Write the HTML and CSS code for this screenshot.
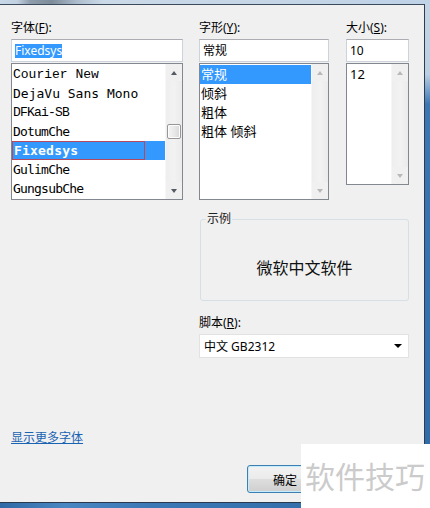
FILE: index.html
```html
<!DOCTYPE html>
<html lang="zh-CN">
<head>
<meta charset="utf-8">
<title>字体</title>
<link rel="stylesheet" href="styles.css">
</head>
<body>
<div class="screen">
  <div class="topbar"></div>
  <div class="mid">
    <div class="dialog">
      <div class="cols">
        <div class="col col-font">
          <div class="label">字体(<u>F</u>):</div>
          <div class="input"><span class="seltext">Fixedsys</span></div>
          <div class="list list-font">
            <div class="items">
              <div class="item f-courier">Courier New</div>
              <div class="item f-dejavu">DejaVu Sans Mono</div>
              <div class="item f-serifnarrow">DFKai-SB</div>
              <div class="item f-narrow">DotumChe</div>
              <div class="item selected f-fixed"><span class="focus">Fixedsys</span></div>
              <div class="item f-narrow">GulimChe</div>
              <div class="item f-narrow">GungsubChe</div>
            </div>
            <div class="sb">
              <div class="sb-btn"><i class="arr up"></i></div>
              <div class="sb-track"><div class="thumb"></div></div>
              <div class="sb-btn"><i class="arr down"></i></div>
            </div>
          </div>
        </div>
        <div class="col col-style">
          <div class="label">字形(<u>Y</u>):</div>
          <div class="input"><span>常规</span></div>
          <div class="list list-style">
            <div class="items cjk">
              <div class="item selected">常规</div>
              <div class="item">倾斜</div>
              <div class="item">粗体</div>
              <div class="item">粗体 倾斜</div>
            </div>
            <div class="sb">
              <div class="sb-btn"><i class="arr up off"></i></div>
              <div class="sb-track"></div>
              <div class="sb-btn"><i class="arr down off"></i></div>
            </div>
          </div>
        </div>
        <div class="col col-size">
          <div class="label">大小(<u>S</u>):</div>
          <div class="input"><span>10</span></div>
          <div class="list list-size">
            <div class="items cjk size-items">
              <div class="item">12</div>
            </div>
            <div class="sb">
              <div class="sb-btn"><i class="arr up off"></i></div>
              <div class="sb-track"></div>
              <div class="sb-btn"><i class="arr down off"></i></div>
            </div>
          </div>
        </div>
      </div>
      <div class="lower">
        <fieldset class="sample">
          <legend>示例</legend>
          <div class="sample-text">微软中文软件</div>
        </fieldset>
        <div class="label">脚本(<u>R</u>):</div>
        <div class="select"><span>中文 GB2312</span><i class="arr down black"></i></div>
      </div>
      <a class="more" href="#">显示更多字体</a>
      <div class="btnrow"><button class="btn">确定</button></div>
    </div>
    <div class="frame-r"></div>
  </div>
  <div class="frame-b"></div>
  <div class="watermark">软件技巧</div>
</div>
</body>
</html>
```

FILE: styles.css
```css
* { box-sizing: border-box; }
html, body { margin: 0; padding: 0; }
body {
  width: 430px;
  height: 508px;
  overflow: hidden;
  font-family: "Noto Sans", "Noto Sans CJK SC", sans-serif;
  font-size: 12px;
  color: #000;
}
.screen {
  position: relative;
  width: 430px;
  height: 508px;
  display: flex;
  flex-direction: column;
}
.topbar {
  height: 4px;
  flex: none;
  background: linear-gradient(to right, #c9d8e8 0, #c2d1e1 4%, #8e9cab 7%, #7d8b9a 12%, #aebdcd 18%, #cbd9e8 24%, #c6d6e7 60%, #bfd2e6 100%);
}
.mid {
  flex: none;
  height: 499px;
  display: flex;
}
.dialog {
  width: 425px;
  height: 499px;
  flex: none;
  background: #f0f0f0;
  border-top: 1px solid #3a4a5c;
  border-right: 1px solid #2e3d4e;
  border-bottom: 1px solid #2a3a4c;
  padding: 16px 0 0 11px;
}
.frame-r {
  flex: 1;
  background: linear-gradient(to bottom, #c4d4e4 0, #bccfe2 70px, #6f9cc9 88px, #3d77b3 100px, #3471af 300px, #2f6aa7 100%);
}
.frame-b {
  flex: 1;
  background: linear-gradient(to right, #2f6aa6 0, #4a86c2 15%, #3c78b6 35%, #3570ad 70%, #3a76b3 100%);
}

.cols { display: flex; align-items: flex-start; }
.col-font { width: 172px; margin-right: 16px; }
.col-style { width: 130px; margin-right: 17px; }
.col-size { width: 63px; }

.label {
  font-family: "Noto Sans", "Noto Sans CJK SC", sans-serif;
  font-size: 12px;
  line-height: 14px;
  height: 14px;
  margin-bottom: 4px;
  color: #000;
  white-space: nowrap;
}
.label u { text-decoration: underline; text-underline-offset: 1px; }

.input {
  height: 23px;
  margin-bottom: 1px;
  background: #fff;
  border: 1px solid #cdd3da;
  border-top-color: #abadb3;
  display: flex;
  align-items: center;
  padding-left: 3px;
  font-family: "Noto Sans", "Noto Sans CJK SC", sans-serif;
  font-size: 12px;
  line-height: 14px;
}
.seltext { background: #3399ff; color: #fff; }

.list {
  display: flex;
  background: #fff;
  border: 1px solid #828790;
}
.list-font, .list-style { height: 137px; }
.list-size { height: 122px; }
.items { flex: 1; padding-top: 1px; overflow: hidden; }
.item {
  height: 19px;
  line-height: 19px;
  padding-left: 1px;
  white-space: nowrap;
}
.item.selected { background: #3399ff; color: #fff; }
.cjk .item { font-family: "Noto Sans", "Noto Sans CJK SC", sans-serif; font-size: 13px; }
.size-items .item { padding-left: 3px; }

.f-courier { font-family: "Liberation Mono", monospace; font-size: 13px; }
.f-dejavu { font-family: "DejaVu Sans Mono", monospace; font-size: 13px; }
.f-serifnarrow { font-family: "Liberation Mono", monospace; font-size: 13px; letter-spacing: -0.8px; }
.f-narrow { font-family: "DejaVu Sans Mono", monospace; font-size: 13px; letter-spacing: -0.8px; }
.f-fixed { font-family: "DejaVu Sans Mono", monospace; font-size: 13px; font-weight: bold; letter-spacing: 0.2px; padding-left: 0; }
.focus {
  display: block;
  width: 133px;
  height: 19px;
  line-height: 17px;
  border: 1px solid #b4485c;
  padding-left: 1px;
}

.sb {
  width: 17px;
  flex: none;
  display: flex;
  flex-direction: column;
  background: #f0f0f0;
  border-left: 1px solid #f7f7f7;
}
.sb-btn {
  height: 17px;
  flex: none;
  display: flex;
  align-items: center;
  justify-content: center;
}
.sb-track { flex: 1; background: linear-gradient(to right, #eeeeee, #f2f2f2 50%, #ebebeb); }
.thumb {
  margin: 43px 0 0 1px;
  width: 14px;
  height: 15px;
  border: 1px solid #979797;
  border-radius: 2px;
  background: linear-gradient(to right, #f4f4f4, #e9e9e9 50%, #d8d8d8);
  box-shadow: inset 0 0 0 1px #fdfdfd;
}
.arr { display: block; width: 0; height: 0; }
.arr.up { border-left: 3.5px solid transparent; border-right: 3.5px solid transparent; border-bottom: 4px solid #555a62; }
.arr.down { border-left: 3.5px solid transparent; border-right: 3.5px solid transparent; border-top: 4px solid #555a62; }
.arr.off.up { border-bottom-color: #b9b9b9; }
.arr.off.down { border-top-color: #b9b9b9; }
.arr.black { border-top-color: #000; border-left-width: 4px; border-right-width: 4px; }

.lower {
  margin-left: 188px;
  width: 210px;
  margin-top: 12px;
}
fieldset.sample {
  margin: 0 0 0 1px;
  padding: 0 0 0 5px;
  border: 1px solid #d5dfe5;
  border-radius: 3px;
  width: 209px;
  min-width: 0;
}
fieldset.sample legend {
  padding: 0 1px;
  font-size: 12px;
  line-height: 14px;
  color: #222;
}
.sample-text {
  margin-left: -5px;
  height: 74px;
  padding-top: 31px;
  text-align: center;
  font-family: "Noto Sans CJK SC", sans-serif;
  font-size: 16px;
  line-height: 20px;
  color: #111;
}
.lower .label { margin-top: 15px; }
.select {
  height: 24px;
  background: #fff;
  border: 1px solid #e2e2e2;
  display: flex;
  align-items: center;
  justify-content: space-between;
  padding: 0 6px 0 4px;
  font-family: "Noto Sans", "Noto Sans CJK SC", sans-serif;
  font-size: 12px;
}

.more {
  display: inline-block;
  margin-top: 72px;
  font-family: "Noto Sans CJK SC", sans-serif;
  font-size: 12px;
  line-height: 14px;
  color: #1a63b3;
  text-decoration: underline;
}
.btnrow { margin-top: 19px; padding-left: 236px; }
.btn {
  width: 76px;
  height: 28px;
  border: 1px solid #3c7fb1;
  border-radius: 3px;
  background: linear-gradient(to bottom, #f2f2f2 0, #ebebeb 48%, #dddddd 52%, #cfcfcf 100%);
  box-shadow: inset 0 0 0 1px #c4ecfc;
  font-family: "Noto Sans CJK SC", sans-serif;
  font-size: 12px;
  color: #000;
  padding: 0;
}

.watermark {
  position: absolute;
  left: 301px;
  top: 444px;
  width: 129px;
  height: 64px;
  background: #fff;
  padding: 15px 0 0 4px;
  font-family: "Noto Sans CJK SC", sans-serif;
  font-size: 30px;
  line-height: 32px;
  color: #cbcbcb;
  white-space: nowrap;
}
```
